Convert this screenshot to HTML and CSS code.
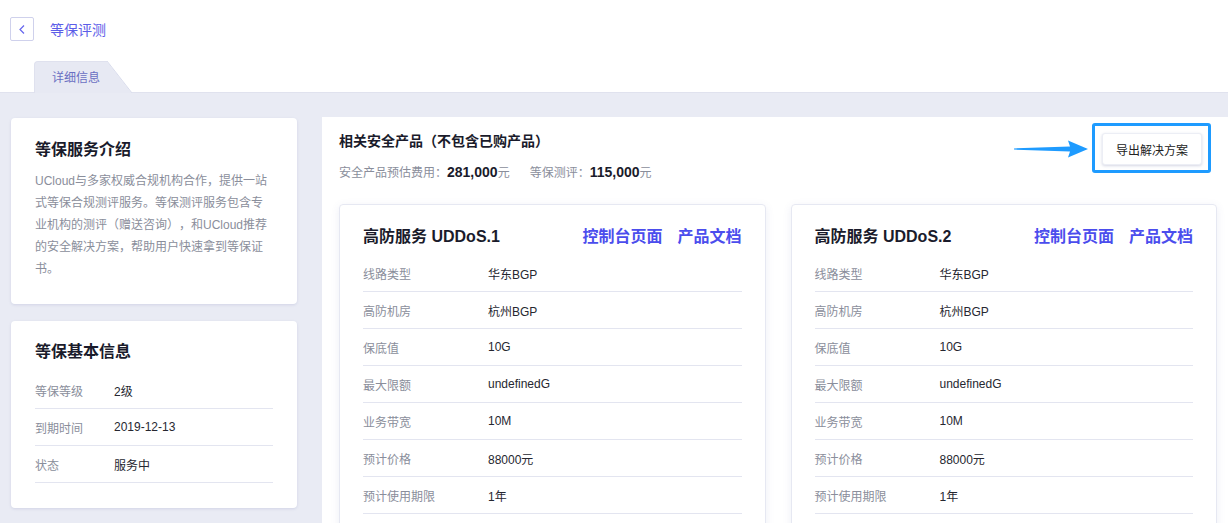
FILE: index.html
```html
<!DOCTYPE html>
<html lang="zh-CN">
<head>
<meta charset="utf-8">
<title>等保评测</title>
<link rel="stylesheet" href="styles.css">
</head>
<body>
<header class="top">
  <div class="title-row">
    <button class="back" type="button" aria-label="返回">
      <svg width="6" height="9" viewBox="0 0 6 9"><path d="M5 0.5 L1 4.5 L5 8.5" fill="none" stroke="#6565ee" stroke-width="1.2"/></svg>
    </button>
    <span class="page-title">等保评测</span>
  </div>
  <div class="tabs"><div class="tab">详细信息</div></div>
</header>
<main class="content">
  <aside class="side">
    <section class="card intro">
      <h2>等保服务介绍</h2>
      <p>UCloud与多家权威合规机构合作，提供一站式等保合规测评服务。等保测评服务包含专业机构的测评（赠送咨询），和UCloud推荐的安全解决方案，帮助用户快速拿到等保证书。</p>
    </section>
    <section class="card info">
      <h2>等保基本信息</h2>
      <div class="kv side-kv">
        <div class="kv-row"><span class="k">等保等级</span><span class="v">2级</span></div>
        <div class="kv-row"><span class="k">到期时间</span><span class="v">2019-12-13</span></div>
        <div class="kv-row"><span class="k">状态</span><span class="v">服务中</span></div>
      </div>
    </section>
  </aside>
  <section class="panel">
    <div class="panel-head">
      <div class="summary">
        <h3>相关安全产品（不包含已购产品）</h3>
        <p class="cost"><span>安全产品预估费用：<b>281,000</b>元</span><span>等保测评：<b>115,000</b>元</span></p>
      </div>
      <div class="highlight">
        <svg class="arrow" width="74" height="18" viewBox="0 0 74 18"><polygon points="0,8.4 56,6.6 54,0.5 74,9 54,17.5 56,11.4 0,9.6" fill="#1e9bff"/></svg>
        <button class="export" type="button">导出解决方案</button>
      </div>
    </div>
    <div class="products">
      <article class="product">
        <div class="product-head">
          <h4>高防服务 UDDoS.1</h4>
          <div class="links"><a href="#">控制台页面</a><a href="#">产品文档</a></div>
        </div>
        <div class="kv prod-kv">
          <div class="kv-row"><span class="k">线路类型</span><span class="v">华东BGP</span></div>
          <div class="kv-row"><span class="k">高防机房</span><span class="v">杭州BGP</span></div>
          <div class="kv-row"><span class="k">保底值</span><span class="v">10G</span></div>
          <div class="kv-row"><span class="k">最大限额</span><span class="v">undefinedG</span></div>
          <div class="kv-row"><span class="k">业务带宽</span><span class="v">10M</span></div>
          <div class="kv-row"><span class="k">预计价格</span><span class="v">88000元</span></div>
          <div class="kv-row"><span class="k">预计使用期限</span><span class="v">1年</span></div>
        </div>
      </article>
      <article class="product">
        <div class="product-head">
          <h4>高防服务 UDDoS.2</h4>
          <div class="links"><a href="#">控制台页面</a><a href="#">产品文档</a></div>
        </div>
        <div class="kv prod-kv">
          <div class="kv-row"><span class="k">线路类型</span><span class="v">华东BGP</span></div>
          <div class="kv-row"><span class="k">高防机房</span><span class="v">杭州BGP</span></div>
          <div class="kv-row"><span class="k">保底值</span><span class="v">10G</span></div>
          <div class="kv-row"><span class="k">最大限额</span><span class="v">undefinedG</span></div>
          <div class="kv-row"><span class="k">业务带宽</span><span class="v">10M</span></div>
          <div class="kv-row"><span class="k">预计价格</span><span class="v">88000元</span></div>
          <div class="kv-row"><span class="k">预计使用期限</span><span class="v">1年</span></div>
        </div>
      </article>
    </div>
  </section>
</main>
</body>
</html>
```

FILE: styles.css
```css
html, body {
  margin: 0;
  padding: 0;
  overflow: hidden;
}
body {
  font-family: "Liberation Sans", "Noto Sans CJK SC", sans-serif;
  background: #e9ebf4;
  color: #333;
  text-spacing-trim: space-all;
  font-feature-settings: "chws" 0, "halt" 0, "palt" 0;
}
.top {
  box-sizing: border-box;
  height: 93px;
  background: #fff;
  border-bottom: 1px solid #e0e2ee;
  padding: 17px 0 0 10px;
}
.title-row {
  display: flex;
  align-items: center;
  height: 24px;
}
.back {
  box-sizing: border-box;
  width: 24px;
  height: 24px;
  padding: 0;
  border: 1px solid #cfd1ec;
  border-radius: 2px;
  background: #fff;
  display: flex;
  align-items: center;
  justify-content: center;
}
.page-title {
  margin-left: 16px;
  font-size: 14px;
  color: #5b5de8;
}
.tabs {
  margin: 20px 0 0 24px;
  display: flex;
}
.tab {
  position: relative;
  box-sizing: border-box;
  height: 32px;
  width: 73px;
  padding-left: 17px;
  line-height: 32px;
  font-size: 12px;
  color: #6a70c2;
  background: #e7e9f3;
  border-top-left-radius: 4px;
  border-top: 1px solid #dfe1ee;
  border-left: 1px solid #dfe1ee;
}
.tab::after {
  content: "";
  position: absolute;
  top: -1px;
  left: 100%;
  width: 25px;
  height: 32px;
  background: linear-gradient(to top right, #e7e9f3 calc(50% - 0.5px), #d9dcec 50%, transparent calc(50% + 0.8px));
}
.content {
  display: flex;
  align-items: flex-start;
  gap: 25px;
  padding: 24px 0 0 11px;
}
.side {
  width: 286px;
  flex: none;
  margin-top: 1px;
  display: flex;
  flex-direction: column;
  gap: 17px;
}
.card {
  background: #fff;
  border-radius: 4px;
  box-shadow: 0 1px 3px rgba(70, 80, 150, 0.14);
}
.card h2 {
  margin: 0 0 8px;
  font-size: 16px;
  line-height: 24px;
  font-weight: bold;
  color: #1a1b2b;
}
.intro {
  padding: 20px 24px 24px;
}
.intro p {
  margin: 0;
  font-size: 12px;
  line-height: 22px;
  color: #8a8e9b;
}
.info {
  padding: 19px 24px 25px;
}
.kv-row {
  box-sizing: border-box;
  height: 37px;
  display: flex;
  align-items: center;
  border-bottom: 1px solid #e3e5f0;
  font-size: 12px;
}
.k {
  color: #8a8e9b;
  flex: none;
}
.v {
  color: #262730;
}
.side-kv .k {
  width: 79px;
}
.prod-kv .k {
  width: 125px;
}
.panel {
  flex: 1;
  min-width: 0;
  background: #fff;
  padding: 6px 11px 40px 17px;
}
.panel-head {
  display: flex;
  justify-content: space-between;
  align-items: flex-start;
}
.summary {
  padding-top: 8px;
}
.summary h3 {
  margin: 0;
  font-size: 14px;
  line-height: 20px;
  font-weight: bold;
  color: #1a1b2b;
}
.cost {
  margin: 11px 0 0;
  font-size: 12px;
  line-height: 20px;
  color: #8a8e9b;
}
.cost b {
  font-size: 14px;
  color: #1a1b2b;
}
.cost span + span {
  margin-left: 20px;
}
.highlight {
  position: relative;
  border: 3px solid #1e9bff;
  border-radius: 3px;
  padding: 7px 6px 5px 7px;
  margin-right: 6px;
}
.arrow {
  position: absolute;
  right: calc(100% + 7px);
  top: 14px;
}
.export {
  box-sizing: border-box;
  width: 100px;
  height: 32px;
  background: #fff;
  border: 1px solid #eceef5;
  border-radius: 3px;
  box-shadow: 0 1px 3px rgba(60, 70, 130, 0.22);
  font-family: inherit;
  font-size: 12px;
  color: #222;
  padding: 0;
}
.products {
  margin-top: 21px;
  display: grid;
  grid-template-columns: 1fr 1fr;
  gap: 25px;
}
.product {
  border: 1px solid #e6e8f2;
  border-radius: 4px;
  box-shadow: 0 2px 8px rgba(80, 90, 170, 0.1);
  padding: 18px 23px 24px;
}
.product-head {
  display: flex;
  justify-content: space-between;
  align-items: center;
  height: 24px;
  margin-bottom: 8px;
}
.product-head h4 {
  margin: 0;
  font-size: 16px;
  font-weight: 600;
  color: #1a1b2b;
}
.links a {
  margin-left: 15px;
  font-size: 16px;
  font-weight: 600;
  color: #4b4ded;
  text-decoration: none;
}
```
